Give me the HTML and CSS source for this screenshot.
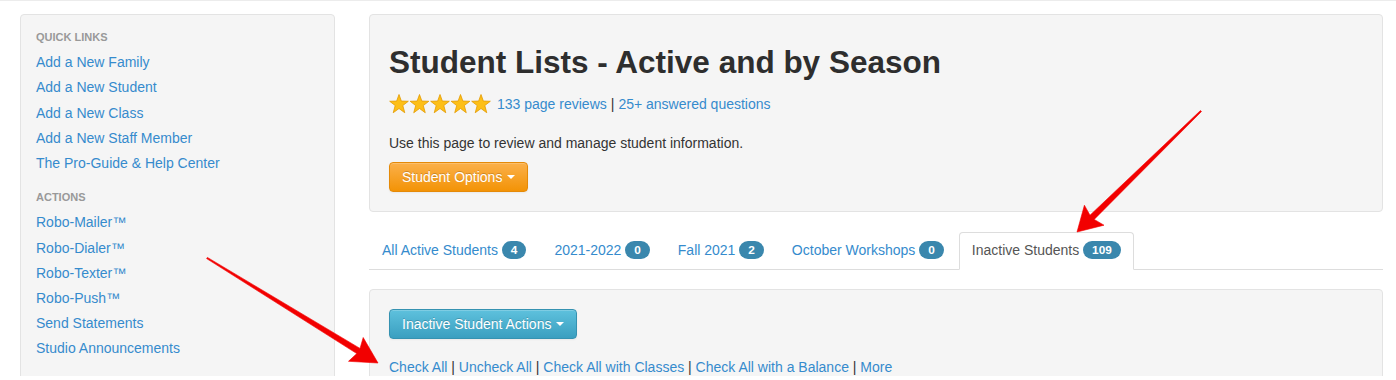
FILE: index.html
```html
<!DOCTYPE html>
<html lang="en">
<head>
<meta charset="utf-8">
<title>Student Lists - Active and by Season</title>
<link rel="stylesheet" href="styles.css">
</head>
<body>
<div class="page">
  <div class="layout">
    <aside class="sidebar">
      <div class="nav-header">Quick Links</div>
      <a class="nav-link" href="#">Add a New Family</a>
      <a class="nav-link" href="#">Add a New Student</a>
      <a class="nav-link" href="#">Add a New Class</a>
      <a class="nav-link" href="#">Add a New Staff Member</a>
      <a class="nav-link" href="#">The Pro-Guide &amp; Help Center</a>
      <div class="nav-header nav-header-spaced">Actions</div>
      <a class="nav-link" href="#">Robo-Mailer™</a>
      <a class="nav-link" href="#">Robo-Dialer™</a>
      <a class="nav-link" href="#">Robo-Texter™</a>
      <a class="nav-link" href="#">Robo-Push™</a>
      <a class="nav-link" href="#">Send Statements</a>
      <a class="nav-link" href="#">Studio Announcements</a>
    </aside>

    <main class="main">
      <section class="well header-well">
        <h1 class="title">Student Lists - Active and by Season</h1>
        <div class="rating">
          <svg class="stars" width="102" height="20" viewBox="0 0 102 20" aria-hidden="true">
            <defs>
              <polygon id="star" points="10,0.5 12.35,7.06 19.32,7.27 13.8,11.54 15.76,18.73 10,14.5 4.24,18.73 6.2,11.54 0.68,7.27 7.65,7.06"/>
            </defs>
            <use href="#star" x="0"/>
            <use href="#star" x="20.5"/>
            <use href="#star" x="41"/>
            <use href="#star" x="61.5"/>
            <use href="#star" x="82"/>
          </svg>
          <a href="#">133 page reviews</a> <span class="sep">|</span> <a href="#">25+ answered questions</a>
        </div>
        <p class="desc">Use this page to review and manage student information.</p>
        <button class="btn btn-warning">Student Options <span class="caret"></span></button>
      </section>

      <ul class="nav-tabs">
        <li><a href="#">All Active Students <span class="badge">4</span></a></li>
        <li><a href="#">2021-2022 <span class="badge">0</span></a></li>
        <li><a href="#">Fall 2021 <span class="badge">2</span></a></li>
        <li><a href="#">October Workshops <span class="badge">0</span></a></li>
        <li class="active"><a href="#">Inactive Students <span class="badge">109</span></a></li>
      </ul>

      <section class="well list-well">
        <button class="btn btn-info">Inactive Student Actions <span class="caret"></span></button>
        <div class="check-links">
          <a href="#">Check All</a> <span class="sep">|</span>
          <a href="#">Uncheck All</a> <span class="sep">|</span>
          <a href="#">Check All with Classes</a> <span class="sep">|</span>
          <a href="#">Check All with a Balance</a> <span class="sep">|</span>
          <a href="#">More</a>
        </div>
      </section>
    </main>
  </div>

  <svg class="arrows" width="1396" height="380" viewBox="0 0 1396 380" aria-hidden="true">
    <polygon points="207.4,257.4 360.0,348.4 363.2,337.5 378,363 348.5,361.3 356.8,353.6 206.6,258.6"/>
    <polygon points="1200.5,110.5 1090.0,215.2 1084.4,205.2 1077,232 1104.0,225.2 1094.2,219.4 1201.5,111.5"/>
  </svg>
</div>
</body>
</html>
```

FILE: styles.css
```css
* { box-sizing: border-box; }

html, body {
  margin: 0;
  padding: 0;
  background: #fff;
}

body {
  font-family: "Liberation Sans", Arial, Helvetica, sans-serif;
  font-size: 14px;
  line-height: 20px;
  color: #333;
}

a {
  color: #358bcd;
  text-decoration: none;
}

.page {
  position: relative;
  height: 376px;
  overflow: hidden;
  border-top: 1px solid #ececec;
}

.layout {
  display: grid;
  grid-template-columns: 315px 1014px;
  column-gap: 34px;
  padding: 13px 13px 0 20px;
  align-items: start;
}

/* Sidebar */
.sidebar {
  display: flex;
  flex-direction: column;
  background: #f5f5f5;
  border: 1px solid #e3e3e3;
  border-radius: 4px;
  padding: 10px 15px 40px;
}

.nav-header {
  font-size: 11px;
  font-weight: bold;
  text-transform: uppercase;
  color: #999;
  line-height: 25.2px;
}

.nav-header-spaced {
  margin-top: 9px;
}

.nav-link {
  line-height: 25.2px;
  font-size: 14px;
}

/* Main */
.well {
  background: #f5f5f5;
  border: 1px solid #e3e3e3;
  border-radius: 4px;
  padding: 19px;
}

.title {
  margin: 8px 0 12px;
  font-size: 31.5px;
  line-height: 40px;
  font-weight: bold;
  color: #2e2e2e;
}

.rating {
  display: flex;
  align-items: center;
  height: 20px;
  gap: 4px;
  margin-bottom: 19px;
}

.rating .stars {
  fill: #fdbf17;
  stroke: #e39a00;
  stroke-width: 0.8;
  margin-right: 2px;
}

.sep {
  color: #333;
}

.desc {
  margin: 0 0 9px;
}

.btn {
  display: inline-flex;
  align-items: center;
  font-family: inherit;
  font-size: 14px;
  line-height: 20px;
  padding: 4px 12px;
  border-radius: 4px;
  color: #fff;
  text-shadow: 0 -1px 0 rgba(0, 0, 0, 0.2);
  cursor: pointer;
}

.btn-warning {
  background: linear-gradient(#fbb04a, #f39306);
  border: 1px solid #e58a08;
  box-shadow: inset 0 1px 0 rgba(255, 255, 255, 0.2), 0 1px 2px rgba(0, 0, 0, 0.05);
}

.btn-info {
  background: linear-gradient(#5ec1dd, #3a9fc0);
  border: 1px solid #3592b1;
  box-shadow: inset 0 1px 0 rgba(255, 255, 255, 0.2), 0 1px 2px rgba(0, 0, 0, 0.05);
}

.caret {
  display: inline-block;
  width: 0;
  height: 0;
  margin-left: 5px;
  border-top: 4px solid #fff;
  border-left: 4px solid transparent;
  border-right: 4px solid transparent;
}

/* Tabs */
.nav-tabs {
  list-style: none;
  margin: 20px 0 19px;
  padding: 0;
  display: flex;
  border-bottom: 1px solid #ddd;
}

.nav-tabs li {
  margin-bottom: -1px;
}

.nav-tabs a {
  display: block;
  padding: 7px 12px 9px;
  line-height: 20px;
  margin-right: 2px;
  border: 1px solid transparent;
  border-radius: 4px 4px 0 0;
  white-space: nowrap;
}

.nav-tabs li.active a {
  color: #555;
  background: #fff;
  border-color: #ddd #ddd transparent;
}

.badge {
  display: inline-block;
  padding: 2px 9px;
  font-size: 11.8px;
  font-weight: bold;
  line-height: 14px;
  color: #fff;
  background: #3a87ad;
  border-radius: 9px;
  vertical-align: 1px;
}

.check-links {
  margin-top: 18px;
  line-height: 20px;
}

/* Annotation arrows */
.arrows {
  position: absolute;
  left: 0;
  top: -1px;
  pointer-events: none;
}

.arrows polygon {
  fill: #f20000;
  stroke: #f20000;
  stroke-width: 0.6;
  stroke-linejoin: round;
}
```
